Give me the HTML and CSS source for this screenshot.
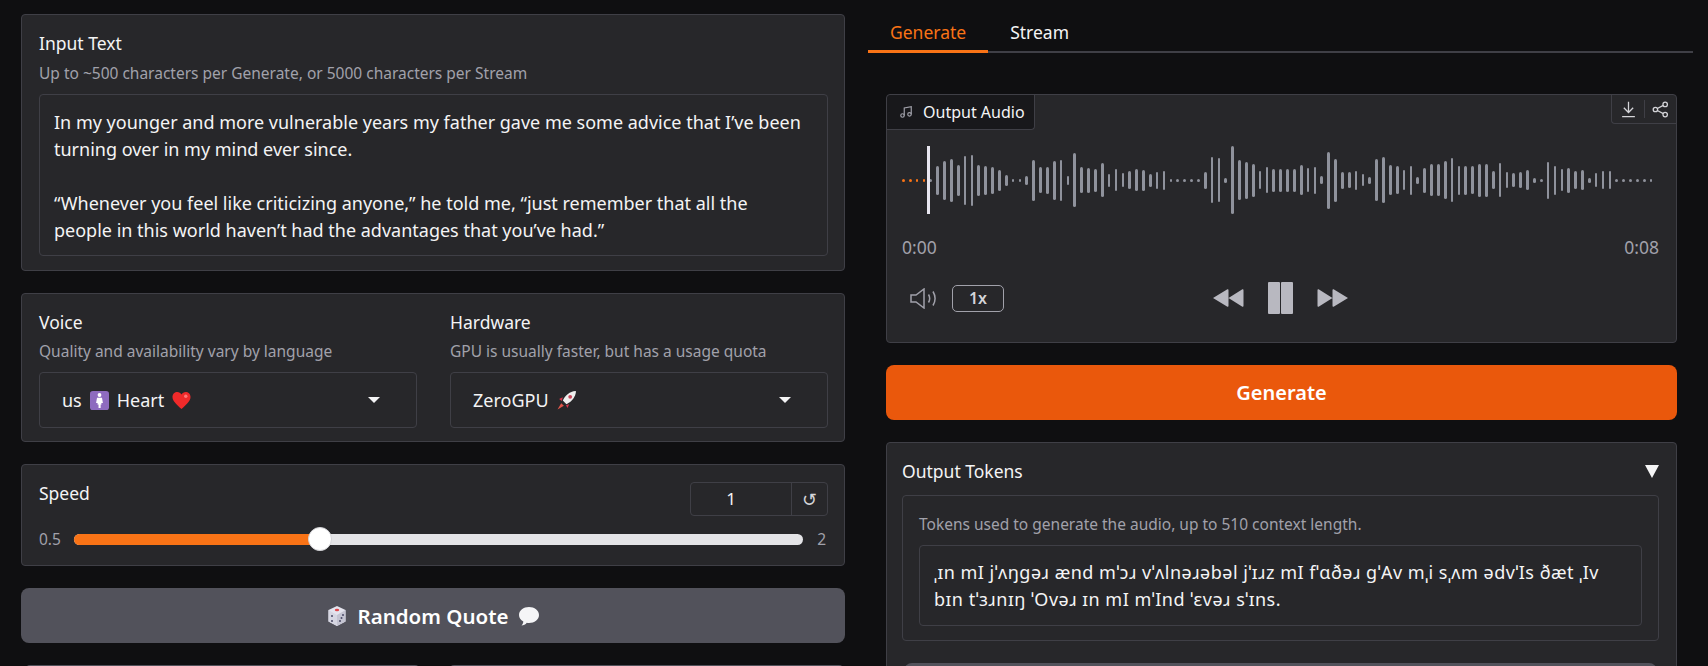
FILE: index.html
```html
<!DOCTYPE html>
<html lang="en">
<head>
  <meta charset="UTF-8">
  <title>Kokoro TTS</title>
  <link rel="stylesheet" href="styles.css">
</head>
<body>
  <div class="app">
    <div class="col-left">
      <div class="panel panel-input">
        <div class="label">Input Text</div>
        <div class="info">Up to ~500 characters per Generate, or 5000 characters per Stream</div>
        <div class="textbox">In my younger and more vulnerable years my father gave me some advice that I’ve been turning over in my mind ever since.<br><br>“Whenever you feel like criticizing anyone,” he told me, “just remember that all the people in this world haven’t had the advantages that you’ve had.”</div>
      </div>

      <div class="panel panel-selects">
        <div class="field">
          <div class="label">Voice</div>
          <div class="info">Quality and availability vary by language</div>
          <div class="select">
            <span class="select-value">us
              <svg class="emoji" viewBox="0 0 20 20"><rect width="20" height="20" rx="3" fill="#8e6bbf"/><circle cx="10" cy="4.2" r="2" fill="#fff"/><path d="M7.4 7h5.2l1 5.6h-1.7l.3 1.6h-1v3.8H9v-3.8H7.8l.3-1.6H6.4z" fill="#fff"/></svg>
              Heart
              <svg class="emoji" viewBox="0 0 20 20"><path d="M10 19C6 15 .5 11 .5 6.3 .5 3 3 1 5.6 1 7.5 1 9 2 10 3.8 11 2 12.5 1 14.4 1 17 1 19.5 3 19.5 6.3 19.5 11 14 15 10 19z" fill="#f02a2a"/><circle cx="14.5" cy="5.5" r="1.8" fill="#f77"/></svg>
            </span>
            <span class="caret"></span>
          </div>
        </div>
        <div class="field">
          <div class="label">Hardware</div>
          <div class="info">GPU is usually faster, but has a usage quota</div>
          <div class="select">
            <span class="select-value">ZeroGPU
              <svg class="emoji" viewBox="1 1 18 18"><path d="M18.5 1C13 1.500 9 5 6.500 10l3.500 3.500C15 11 18.500 7 19 1.500z" fill="#eee"/><circle cx="13.5" cy="6.5" r="1.8" fill="#c9475a"/><path d="M6.500 7 3 8.500l2.500 2zM12.500 13.500 11 17l-1.500-2.500z" fill="#d8344a"/><path d="M5 12.500 1.500 18.500 7.500 15z" fill="#e2574c"/></svg>
            </span>
            <span class="caret"></span>
          </div>
        </div>
      </div>

      <div class="panel panel-speed">
        <div class="speed-top">
          <div class="label">Speed</div>
          <div class="number-box">
            <span class="number-value">1</span>
            <span class="number-reset">↺</span>
          </div>
        </div>
        <div class="slider-row">
          <span class="slider-end">0.5</span>
          <div class="slider">
            <div class="slider-fill"></div>
            <div class="slider-thumb"></div>
          </div>
          <span class="slider-end">2</span>
        </div>
      </div>

      <div class="btn btn-gray btn-quote">
        <svg class="emoji emoji-big" viewBox="0 0 20 22"><path d="M10 1 18.5 5v11.500L10 21 1.500 16.500V5z" fill="#e4e4ee"/><path d="M10 10 18.5 5v11.500L10 21z" fill="#c4c4d2"/><path d="M10 10 1.500 5v11.500L10 21z" fill="#d6d6e2"/><ellipse cx="10" cy="5" rx="2.2" ry="1.3" fill="#e0474c"/><circle cx="5" cy="11" r="1" fill="#4a4a66"/><circle cx="5" cy="16" r="1" fill="#4a4a66"/><circle cx="13" cy="16" r="1" fill="#4a4a66"/><circle cx="16" cy="10" r="1" fill="#4a4a66"/><circle cx="14.5" cy="13" r="1" fill="#4a4a66"/></svg>
        Random Quote
        <svg class="emoji emoji-big" viewBox="0 0 22 22"><path d="M11 2c5.500 0 10 3.500 10 8s-4.500 8-10 8c-.8 0-1.500-.1-2.200-.2C7.500 19.500 5.500 20.500 3.500 20.500c1-1 1.700-2.400 1.800-4C2.700 15 1 12.600 1 10c0-4.500 4.500-8 10-8z" fill="#f5f5f7"/></svg>
      </div>

      <div class="next-row">
        <div class="next-box"></div>
        <div class="next-box"></div>
      </div>
    </div>

    <div class="col-right">
      <div class="tabs">
        <div class="tab tab-active">Generate</div>
        <div class="tab">Stream</div>
      </div>

      <div class="panel panel-audio">
        <div class="audio-head">
          <div class="audio-label">
            <svg class="icon-music" viewBox="0 0 24 24"><path d="M9 18V5l12-2v13"/><circle cx="6" cy="18" r="3"/><circle cx="18" cy="16" r="3"/></svg>
            Output Audio
          </div>
          <div class="audio-actions">
            <svg class="icon-action" viewBox="0 0 20 20"><path d="M10 1v12M4.500 8l5.500 5.500L15.500 8M2.500 18.500h15"/></svg>
            <span class="action-sep"></span>
            <svg class="icon-action" viewBox="0 0 20 20"><circle cx="15.5" cy="4" r="2.6"/><circle cx="4" cy="10" r="2.6"/><circle cx="15.5" cy="16" r="2.6"/><path d="M6.300 8.800l7-3.600M6.300 11.200l7 3.600"/></svg>
          </div>
        </div>

        <div class="wave">
          <div class="wave-bars" id="waveBars"></div>
          <div class="playhead"></div>
        </div>

        <div class="times"><span>0:00</span><span>0:08</span></div>

        <div class="controls">
          <div class="controls-left">
            <svg class="icon-volume" viewBox="0 0 27 21"><path d="M1 7h5l8-6v19l-8-6H1z"/><path d="M18.500 6.500c1.500 2.500 1.500 5.500 0 8M23 3.500c2.500 4.200 2.500 9.800 0 14"/></svg>
            <span class="rate">1x</span>
          </div>
          <div class="controls-mid">
            <svg class="icon-skip" viewBox="0 0 31 20"><path d="M0 10 14 1.500c1-.6 1.500 0 1.500 1v15c0 1-.5 1.600-1.500 1zM15.500 10 29 1.500c1-.6 1.500 0 1.500 1v15c0 1-.5 1.600-1.500 1z"/></svg>
            <div class="pause"><span></span><span></span></div>
            <svg class="icon-skip" viewBox="0 0 31 20"><path d="M31 10 17 1.500c-1-.6-1.500 0-1.500 1v15c0 1 .5 1.600 1.500 1zM15.500 10 2 1.500C1 .9.500 1.500.5 2.500v15c0 1 .5 1.600 1.500 1z"/></svg>
          </div>
          <div></div>
        </div>
      </div>

      <div class="btn btn-orange">Generate</div>

      <div class="panel panel-tokens">
        <div class="tokens-head">
          <div class="label">Output Tokens</div>
          <span class="tokens-arrow"></span>
        </div>
        <div class="tokens-inner">
          <div class="info">Tokens used to generate the audio, up to 510 context length.</div>
          <div class="textbox tokens-text">ˌɪn mI jˈʌŋɡəɹ ænd mˈɔɹ vˈʌlnəɹəbəl jˈɪɹz mI fˈɑðəɹ ɡˈAv mˌi sˌʌm ədvˈIs ðæt ˌIv bɪn tˈɜɹnɪŋ ˈOvəɹ ɪn mI mˈInd ˈɛvəɹ sˈɪns.</div>
        </div>
        <div class="btn btn-gray btn-tokens"></div>
      </div>
    </div>
  </div>

  <script>
    const alturas = [
      3, 3, 3, 3, 3, 29, 39, 43, 31, 49, 51, 31, 29, 27, 21, 11, 3, 3, 9, 41, 26, 27, 39, 41, 9, 54, 26, 25, 23, 34, 13, 22, 14, 18, 22, 21, 13, 17, 19,
      3, 3, 3, 3, 3, 17, 46, 44, 5, 68, 40, 37, 33, 18, 26, 23, 23, 23, 23, 30, 24, 27, 8, 57, 43, 17, 16, 19, 12, 7, 42, 46, 30, 28, 20, 29, 7, 25, 32, 32, 38, 44, 29, 29, 28, 33, 33, 18, 34, 16, 14, 16, 20, 5, 3, 37, 29, 22, 25, 18, 20, 5, 14, 18, 18,
      3, 3, 3, 3, 3, 3
    ];
    const waveBars = document.getElementById('waveBars');
    alturas.forEach((h, i) => {
      const bar = document.createElement('span');
      bar.className = i < 4 ? 'bar bar-played' : 'bar';
      bar.style.height = h + 'px';
      waveBars.appendChild(bar);
    });
  </script>
</body>
</html>
```

FILE: styles.css
```css
* { box-sizing: border-box; margin: 0; padding: 0; }
body {
  font-family: "Noto Sans", "Open Sans", sans-serif;
  background: #0f0f11;
  color: #f4f4f5;
  height: 100vh;
  overflow: hidden;
}
.app {
  display: flex;
  gap: 23px;
  padding: 14px 15px 0 21px;
}
.col-left { width: 824px; display: flex; flex-direction: column; gap: 22px; }
.col-right { width: 825px; display: flex; flex-direction: column; }

.panel {
  background: #27272a;
  border: 1px solid #3f3f46;
  border-radius: 4px;
}
.label { font-size: 17.5px; line-height: 22px; }
.info { font-size: 15.5px; line-height: 20px; color: #a1a1aa; }

.textbox {
  background: #27272a;
  border: 1px solid #3f3f46;
  border-radius: 4px;
  font-size: 18px;
  line-height: 27px;
}

.panel-input { height: 257px; padding: 17px 16px 0 17px; }
.panel-input .info { margin-top: 9px; }
.panel-input .textbox { margin-top: 11px; height: 162px; padding: 14px 23px 14px 14px; }

.panel-selects { height: 149px; padding: 17px 16px 0 17px; display: flex; gap: 33px; }
.field { flex: 1; }
.field .info { margin-top: 8px; }
.select {
  margin-top: 11px;
  height: 56px;
  border: 1px solid #3f3f46;
  border-radius: 4px;
  display: flex;
  align-items: center;
  justify-content: space-between;
  padding: 0 36px 0 22px;
  font-size: 18px;
}
.select-value { display: flex; align-items: center; gap: 8px; }
.emoji { width: 19px; height: 19px; }
.emoji-big { width: 22px; height: 22px; }
.caret {
  width: 0;
  height: 0;
  border-left: 6px solid transparent;
  border-right: 6px solid transparent;
  border-top: 6px solid #f4f4f5;
}

.panel-speed { height: 102px; padding: 17px 16px 0 17px; }
.speed-top { display: flex; justify-content: space-between; align-items: flex-start; }
.number-box {
  width: 138px;
  height: 34px;
  border: 1px solid #3f3f46;
  border-radius: 4px;
  display: flex;
  font-size: 17px;
  line-height: 32px;
  text-align: center;
}
.number-value { flex: 1; padding-right: 20px; }
.number-reset { width: 36px; border-left: 1px solid #3f3f46; color: #d4d4d8; font-size: 18px; }
.slider-row { display: flex; align-items: center; margin-top: 12px; padding-right: 2px; line-height: 22px; }
.slider-end { font-size: 15.5px; color: #a1a1aa; }
.slider {
  position: relative;
  flex: 1;
  height: 11px;
  margin: 0 14px 0 13px;
  border-radius: 6px;
  background: #e4e4e7;
}
.slider-fill { width: 246px; height: 11px; border-radius: 6px 0 0 6px; background: #f97316; }
.slider-thumb {
  position: absolute;
  left: 234px;
  top: -7px;
  width: 24px;
  height: 24px;
  border-radius: 50%;
  background: #fff;
  border: 1px solid #d4d4d8;
}

.btn {
  height: 55px;
  border-radius: 8px;
  display: flex;
  align-items: center;
  justify-content: center;
  gap: 8px;
  font-size: 20px;
  font-weight: 600;
  color: #fff;
}
.btn-gray { background: #52525b; }
.btn-quote { font-size: 20.5px; gap: 10px; }
.btn-orange { background: #ea580c; margin: 22px 16px 0 18px; }

.next-row { display: flex; gap: 31px; padding: 0 2px 0 5px; }
.next-box { flex: 1; height: 30px; background: #52525b; border-radius: 4px; }

.tabs { display: flex; height: 39px; border-bottom: 2px solid #3f3f46; }
.tab { padding: 0 22px; height: 39px; font-size: 17.5px; line-height: 36px; }
.tab-active { color: #f97316; border-bottom: 3px solid #f97316; }

.panel-audio { height: 249px; margin: 41px 16px 0 18px; }
.audio-head { display: flex; justify-content: space-between; align-items: flex-start; }
.audio-label {
  height: 35px;
  width: 148px;
  display: flex;
  align-items: center;
  gap: 10px;
  padding-left: 12px;
  font-size: 16px;
  background: #18181b;
  border-right: 1px solid #3f3f46;
  border-bottom: 1px solid #3f3f46;
  border-radius: 4px 0 4px 0;
}
.icon-music { width: 14px; height: 14px; fill: none; stroke: #a1a1aa; stroke-width: 2; }
.audio-actions {
  width: 65px;
  height: 29px;
  display: flex;
  align-items: center;
  justify-content: center;
  gap: 7px;
  border-left: 1px solid #3f3f46;
  border-bottom: 1px solid #3f3f46;
  border-radius: 0 4px 0 4px;
}
.icon-action { width: 17px; height: 17px; fill: none; stroke: #d4d4d8; stroke-width: 1.5; }
.action-sep { width: 1px; height: 18px; background: #3f3f46; }

.wave { position: relative; height: 68px; margin: 16px 0 0 15px; }
.wave-bars { width: 752px; height: 68px; display: flex; align-items: center; justify-content: space-between; }
.bar { width: 2.7px; border-radius: 2px; background: #8f929c; }
.bar-played { background: #f97316; }
.playhead { position: absolute; left: 25px; top: 0; width: 3px; height: 68px; background: #e8e6f0; }

.times {
  display: flex;
  justify-content: space-between;
  margin-top: 22px;
  padding: 0 17px 0 15px;
  font-size: 17.5px;
  line-height: 22px;
  color: #a1a1aa;
}

.controls {
  display: grid;
  grid-template-columns: 1fr auto 1fr;
  align-items: center;
  margin-top: 24px;
  padding: 0 25px 0 23px;
}
.controls-left { display: flex; align-items: center; gap: 15px; }
.icon-volume { width: 27px; height: 21px; fill: none; stroke: #a1a1aa; stroke-width: 1.5; }
.rate {
  width: 52px;
  height: 27px;
  border: 1px solid #a1a1aa;
  border-radius: 5px;
  text-align: center;
  font-size: 16px;
  font-weight: 600;
  line-height: 25px;
  color: #d4d4d8;
}
.controls-mid { display: flex; align-items: center; gap: 24px; }
.icon-skip { width: 31px; height: 20px; fill: #b8b8c0; }
.pause { display: flex; gap: 1px; }
.pause span { width: 12px; height: 32px; border-radius: 1px; background: #b8b8c0; }

.panel-tokens { height: 300px; margin: 22px 16px 0 18px; padding: 17px 17px 0 15px; }
.tokens-head { display: flex; justify-content: space-between; align-items: center; }
.tokens-arrow {
  width: 0;
  height: 0;
  border-left: 7px solid transparent;
  border-right: 7px solid transparent;
  border-top: 13px solid #f4f4f5;
}
.tokens-inner {
  margin-top: 13px;
  height: 146px;
  padding: 18px 16px 0;
  border: 1px solid #3f3f46;
  border-radius: 4px;
}
.tokens-text { margin-top: 11px; height: 81px; padding: 13px 32px 13px 14px; letter-spacing: 0.5px; }
.btn-tokens { margin: 22px 2px 0; }
```
